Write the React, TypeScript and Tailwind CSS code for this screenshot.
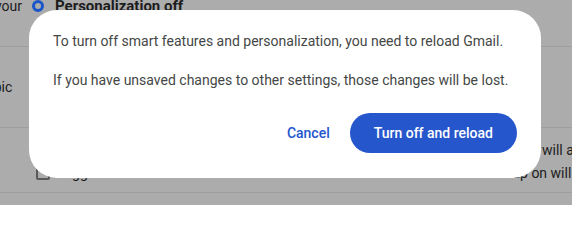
import React from "react";

export default function App() {
  return (
    <div className="relative w-[572px] h-[205px] overflow-hidden bg-[#acacac] text-[#1c1c1c]" style={{ fontFamily: "Roboto, 'Liberation Sans', Arial, sans-serif" }}>
      {/* background page under scrim */}
      <div className="flex flex-col">
        <div className="h-[47px] border-b border-[#9f9f9f] relative">
          <div className="flex items-center h-[14px] -mt-[1px] whitespace-nowrap">
            <span className="text-[14px] -ml-[5px]">your</span>
            <span className="w-[12px] h-[12px] rounded-full border-[3px] border-[#1a55c9] ml-[10px] mr-[11px] shrink-0" />
            <span className="text-[15px] font-bold">Personalization off</span>
          </div>
        </div>
        <div className="h-[81px] border-b border-[#9f9f9f] flex items-center">
          <span className="text-[14px] -ml-[22px] mt-[1px]">Topic</span>
        </div>
        <div className="h-[65px] border-b border-[#9f9f9f] flex flex-col whitespace-nowrap text-[14px]">
          <div className="h-[20px] mt-[12px] flex">
            <span className="ml-[542px]">will apply</span>
          </div>
          <div className="h-[20px] mt-[3px] flex items-center">
            <span className="ml-[36px] w-[14px] h-[14px] border-2 border-[#5a5a5a] rounded-[2px] shrink-0" />
            <span className="ml-[6px]">Suggestions</span>
            <span className="ml-[379px]">up on will</span>
          </div>
        </div>
      </div>

      {/* dialog */}
      <div className="absolute left-[29px] top-[10px] w-[512px] h-[168px] bg-white rounded-[28px] px-6 pt-[21px] flex flex-col">
        <p className="text-[14px] leading-5 text-[#444746]">
          To turn off smart features and personalization, you need to reload Gmail.
        </p>
        <p className="text-[14px] leading-5 text-[#444746] mt-[19px]">
          If you have unsaved changes to other settings, those changes will be lost.
        </p>
        <div className="flex justify-end items-center gap-2 mt-[23px]">
          <button className="h-10 px-3 text-[14px] font-medium text-[#2356cc] rounded-full">Cancel</button>
          <button className="h-10 px-6 text-[14px] font-medium text-white bg-[#2556cc] rounded-full">Turn off and reload</button>
        </div>
      </div>
    </div>
  );
}
